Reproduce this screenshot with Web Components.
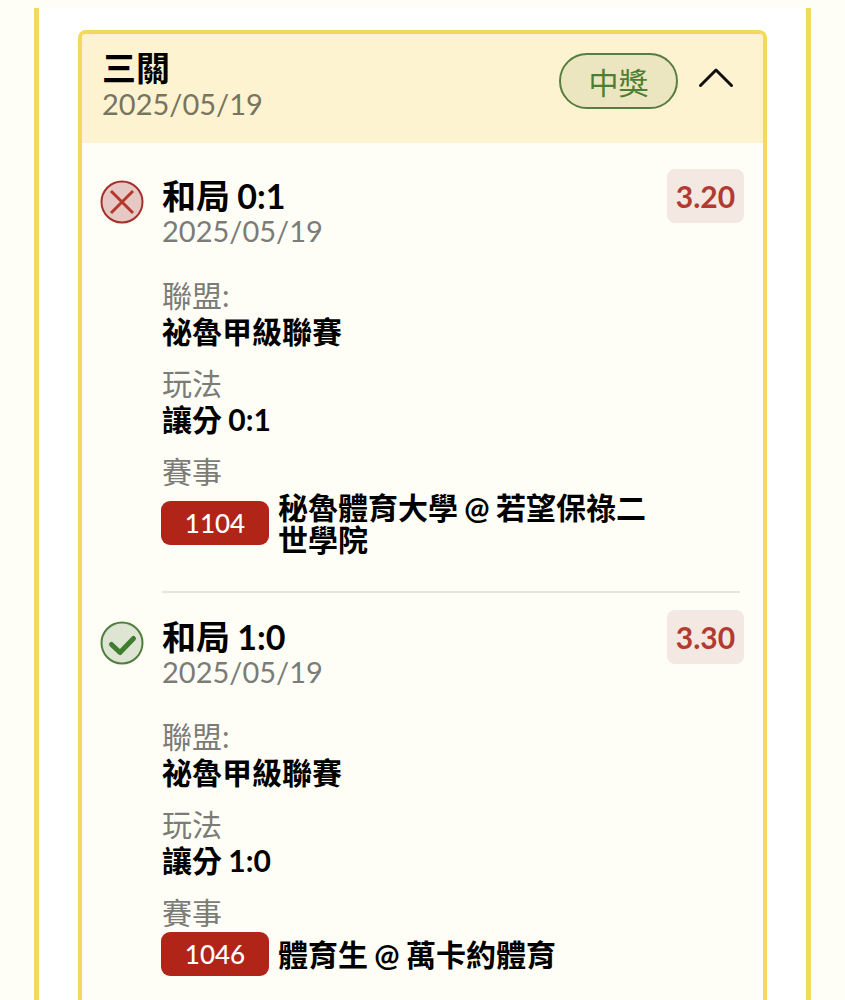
<!DOCTYPE html>
<html lang="zh-Hant">
<head>
<meta charset="utf-8">
<style>
  html, body { margin: 0; background: #fffef6; height: 1000px; overflow: hidden; }
  body { font-family: Lato, "Noto Sans CJK TC", sans-serif; color: #000; }
</style>
</head>
<body>
<bet-panel>
  <bet-card title="三關" date="2025/05/19" status="中獎">
    <bet-leg result="lose" name="和局 0:1" date="2025/05/19" odds="3.20" league="祕魯甲級聯賽" play="讓分 0:1" code="1104" match="秘魯體育大學 @ 若望保祿二世學院"></bet-leg>
    <bet-leg result="win" name="和局 1:0" date="2025/05/19" odds="3.30" league="祕魯甲級聯賽" play="讓分 1:0" code="1046" match="體育生 @ 萬卡約體育"></bet-leg>
  </bet-card>
</bet-panel>
<script>
const panelTpl = document.createElement('template');
panelTpl.innerHTML = `
  <style>
    :host {
      display: block;
      margin: 8px 34px 0;
      padding: 22px 39px 0;
      height: 992px;
      box-sizing: border-box;
      background: #fff;
      border-left: 5px solid #f3d95e;
      border-right: 5px solid #f3d95e;
    }
  </style>
  <slot></slot>`;

class BetPanel extends HTMLElement {
  constructor() {
    super();
    this.attachShadow({ mode: 'open' }).appendChild(panelTpl.content.cloneNode(true));
  }
}

const cardTpl = document.createElement('template');
cardTpl.innerHTML = `
  <style>
    :host {
      display: block;
      border: 4px solid #f3d95e;
      border-bottom: none;
      border-radius: 8px 8px 0 0;
      background: #fffef6;
      height: 970px;
      box-sizing: border-box;
      overflow: hidden;
    }
    header {
      display: flex;
      align-items: flex-start;
      justify-content: space-between;
      height: 109px;
      box-sizing: border-box;
      padding: 16px 29px 0 20px;
      background: #fdf3d0;
    }
    h2 { margin: 0; font-size: 34px; line-height: 36px; font-weight: 700; }
    .date { font-size: 29px; line-height: 36px; color: #77745f; }
    .right { display: flex; align-items: center; gap: 20px; padding-top: 3px; }
    .badge {
      width: 119px; height: 56px; box-sizing: border-box;
      display: flex; align-items: center; justify-content: center;
      border: 2px solid #587d42; border-radius: 28px;
      background: #ebe6bf; color: #4c7f34; font-size: 30px;
    }
    svg { display: block; margin-top: -6px; }
    main { padding: 26px 23px 0 18px; }
  </style>
  <header>
    <div>
      <h2></h2>
      <div class="date"></div>
    </div>
    <div class="right">
      <span class="badge"></span>
      <svg width="36" height="22" viewBox="0 0 36 22" fill="none" stroke="#111" stroke-width="3" stroke-linecap="round" stroke-linejoin="round"><path d="M2.5 18.5 18 3l15.5 15.5"/></svg>
    </div>
  </header>
  <main><slot></slot></main>`;

class BetCard extends HTMLElement {
  constructor() {
    super();
    this.attachShadow({ mode: 'open' }).appendChild(cardTpl.content.cloneNode(true));
  }

  connectedCallback() {
    this.shadowRoot.querySelector('h2').textContent = this.getAttribute('title');
    this.shadowRoot.querySelector('.date').textContent = this.getAttribute('date');
    this.shadowRoot.querySelector('.badge').textContent = this.getAttribute('status');
  }
}

const legTpl = document.createElement('template');
legTpl.innerHTML = `
  <style>
    :host { display: block; }
    :host(:not(:last-child)) .body { border-bottom: 2px solid #e6e5de; padding-bottom: 36px; margin-bottom: 17px; }
    .leg { display: flex; gap: 18px; }
    .icon { width: 44px; flex: none; padding-top: 11px; }
    .body { flex: 1; min-width: 0; }
    .top { display: flex; justify-content: space-between; align-items: flex-start; }
    h3 { margin: 0; font-size: 34px; line-height: 35px; font-weight: 700; padding-top: 9px; word-spacing: -1px; }
    .date { font-size: 29px; line-height: 36px; color: #7b7b78; }
    .odds {
      margin-right: -4px; width: 77px; height: 54px;
      display: flex; align-items: center; justify-content: center;
      background: #f3e8e2; border-radius: 8px;
      color: #b23a30; font-size: 30px; font-weight: 700;
    }
    dl { margin: 28px 0 0; }
    dt { font-size: 30px; line-height: 36px; color: #7b7b78; margin-top: 16px; }
    dd { margin: 0; font-size: 30px; line-height: 36px; font-weight: 700; word-spacing: -1px; }
    .match { display: flex; align-items: center; gap: 9px; padding-top: 2px; max-width: 490px; }
    .code {
      flex: none; width: 108px; height: 44px; margin-left: -1px;
      display: flex; align-items: center; justify-content: center;
      background: #b02518; border-radius: 9px;
      color: #fff; font-size: 26px; font-weight: 500;
    }
    .name { line-height: 32px; font-size: 30px; }
  </style>
  <div class="leg">
    <div class="icon"></div>
    <div class="body">
      <div class="top">
        <div><h3></h3><div class="date"></div></div>
        <div class="odds"></div>
      </div>
      <dl>
        <dt>聯盟:</dt><dd class="league"></dd>
        <dt>玩法</dt><dd class="play"></dd>
        <dt>賽事</dt>
        <dd class="match"><span class="code"></span><span class="name"></span></dd>
      </dl>
    </div>
  </div>`;

const icons = {
  lose: `<svg width="44" height="44" viewBox="0 0 44 44" fill="none"><circle cx="22" cy="22" r="20.5" fill="#e6c9c4" stroke="#a3312a" stroke-width="2"/><path d="M11 11l22 22M33 11 11 33" stroke="#b5382c" stroke-width="3"/></svg>`,
  win: `<svg width="44" height="44" viewBox="0 0 44 44" fill="none"><circle cx="22" cy="22" r="20.5" fill="#dfe5d3" stroke="#4f7f3f" stroke-width="2"/><path d="M11.5 23.5l8.5 8 13.5-14" stroke="#3f7d2f" stroke-width="5" stroke-linecap="round" stroke-linejoin="round"/></svg>`
};

class BetLeg extends HTMLElement {
  constructor() {
    super();
    this.attachShadow({ mode: 'open' }).appendChild(legTpl.content.cloneNode(true));
  }

  connectedCallback() {
    const root = this.shadowRoot;
    root.querySelector('.icon').innerHTML = icons[this.getAttribute('result')];
    root.querySelector('h3').textContent = this.getAttribute('name');
    root.querySelector('.date').textContent = this.getAttribute('date');
    root.querySelector('.odds').textContent = this.getAttribute('odds');
    root.querySelector('.league').textContent = this.getAttribute('league');
    root.querySelector('.play').textContent = this.getAttribute('play');
    root.querySelector('.code').textContent = this.getAttribute('code');
    root.querySelector('.name').textContent = this.getAttribute('match');
  }
}

customElements.define('bet-panel', BetPanel);
customElements.define('bet-card', BetCard);
customElements.define('bet-leg', BetLeg);
</script>
</body>
</html>
